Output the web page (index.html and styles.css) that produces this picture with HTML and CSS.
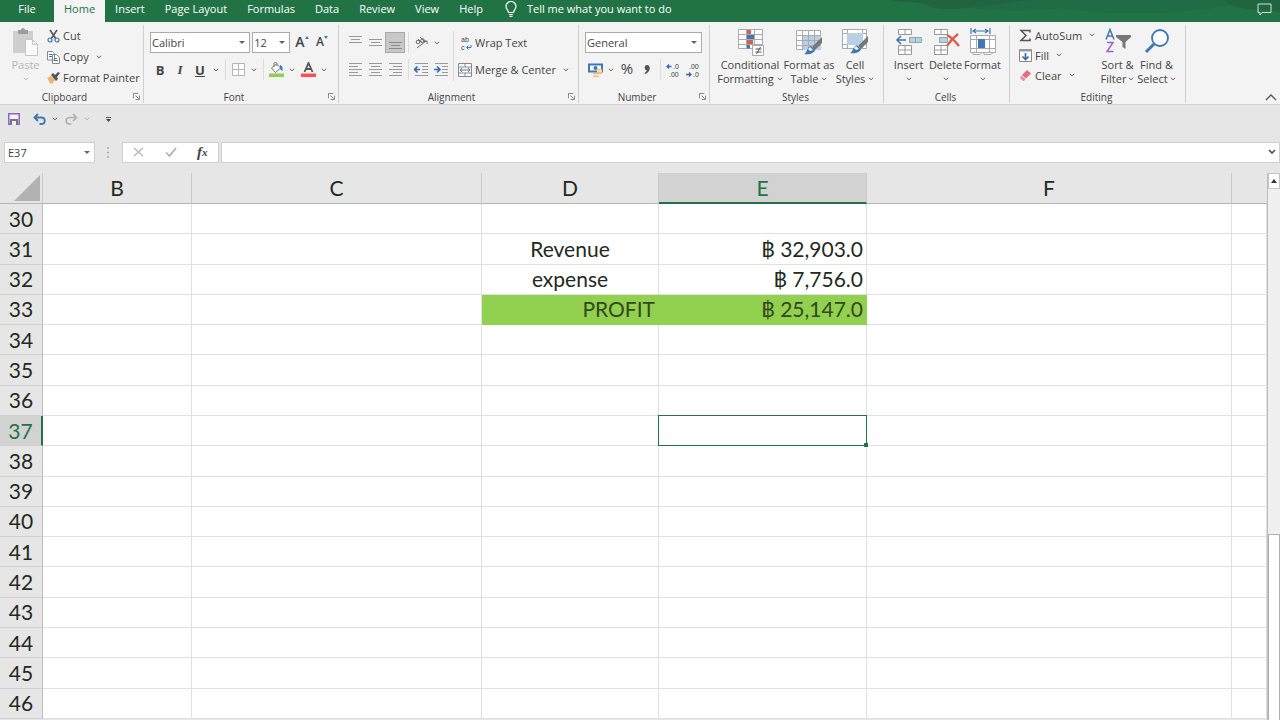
FILE: index.html
```html
<!DOCTYPE html>
<html lang="en">
<head>
    <meta charset="UTF-8">
    <meta name="viewport" content="width=device-width, initial-scale=1.0">
    <title>Excel</title>
    <link rel="stylesheet" href="styles.css">
</head>
<body>

<!-- shared icons -->
<svg class="defs" width="0" height="0">
    <symbol id="chev" viewBox="0 0 6 4"><path d="M.8 .8L3 2.8L5.2 .8" fill="none" stroke="#666"/></symbol>
    <symbol id="launch" viewBox="0 0 8 8"><path d="M.5 6V.5H6M3 3l3.5 3.5M7.5 3v4.500H3" fill="none" stroke="#777"/></symbol>
    <symbol id="brush" viewBox="0 0 20 20"><path d="M19 1v6l-7 7-3-3z" fill="#777"/><path d="M8 10l4 4c-1 3-5 5-11 4 3-1 3-7 7-8z" fill="#3e78b3"/><path d="M7 11l3 3-3 1-2-2z" fill="#eef5fb"/></symbol>
</svg>

<header class="titlebar">
    <svg class="swirl" viewBox="0 0 390 22"><path d="M0 0c12 3 24 1 35 4 8 7 28 5 44 4 16-2 26-1 36-4 10-2 20-2 30-4z" fill="#206540"/><path d="M80 8c20 3 60 4 90 0 50 8 120 7 170-3V0H140z" fill="#206c44"/><path d="M335 0c4 6 14 8 22 9 10 1 20 1 33 3V0z" fill="#206540"/></svg>
    <nav class="tabs">
        <button class="tab file">File</button>
        <button class="tab active">Home</button>
        <button class="tab">Insert</button>
        <button class="tab">Page Layout</button>
        <button class="tab">Formulas</button>
        <button class="tab">Data</button>
        <button class="tab">Review</button>
        <button class="tab">View</button>
        <button class="tab">Help</button>
    </nav>
    <label class="tell">
        <svg width="12" height="16" viewBox="0 0 12 16"><path d="M3.500 11.500C3.500 9 1 8.500 1 5.500a5 5 0 0 1 10 0c0 3-2.500 3.500-2.500 6zM4 13.500h4M4.500 15.300h3" fill="none" stroke="#fff" stroke-width="1.200"/></svg>
        <input type="text" placeholder="Tell me what you want to do" aria-label="Tell me what you want to do">
    </label>
    <button class="comments" aria-label="Comments"><svg width="15" height="13" viewBox="0 0 15 13"><path d="M1 1h13v8.500H5L3 12V9.500H1z" fill="none" stroke="#cfe3d7"/></svg></button>
</header>

<div class="ribbon">
    <section class="group clipboard">
        <div class="group-body">
            <button class="big disabled">
                <svg width="28" height="28" viewBox="0 0 28 28"><path d="M1 3h20v22H1z" fill="#cfcfcf"/><path d="M6 2h3c0-2.500 4-2.500 4 0h3v4H6z" fill="#9c9c9c"/><path d="M13.500 11.500h7l5 5v11h-12z" fill="#fafafa" stroke="#c4c4c4"/><path d="M20.500 11.500v5h5" fill="none" stroke="#c4c4c4"/></svg>
                <span>Paste</span>
                <svg class="chev"><use href="#chev"/></svg>
            </button>
            <div class="stack">
                <button class="item"><svg width="13" height="14" viewBox="0 0 13 14"><path d="M3 1l6 9M10 1L4 10" stroke="#555" stroke-width="1.600"/><circle cx="3" cy="11" r="2" fill="none" stroke="#3e78b3" stroke-width="1.200"/><circle cx="10" cy="11" r="2" fill="none" stroke="#3e78b3" stroke-width="1.200"/></svg>Cut</button>
                <button class="item"><svg width="13" height="14" viewBox="0 0 13 14"><path d="M.5 1.500h5l2 2V10h-7zM5.500 4.500h4l3 3v6h-7z" fill="#fff" stroke="#888"/><path d="M2 4.500h3M2 6.500h3M7 8.500h3M7 10.500h4" stroke="#3e78b3"/></svg>Copy<svg class="chev"><use href="#chev"/></svg></button>
                <button class="item"><svg width="13" height="14" viewBox="0 0 13 14"><path d="M0 7l4-2 4 4-3 4C2 12 2 9 0 7z" fill="#efb566"/><path d="M4 4l2-2 2 2 3-3 2 1-3 4 1 2-2 2z" fill="#555"/></svg>Format Painter</button>
            </div>
        </div>
        <div class="group-label">Clipboard<button class="launch" aria-label="Clipboard settings"><svg width="7" height="7"><use href="#launch"/></svg></button></div>
    </section>

    <section class="group font">
        <div class="group-body rows">
            <div class="row">
                <span class="combo name"><select aria-label="Font"><option>Calibri</option></select></span>
                <span class="combo size"><select aria-label="Font size"><option>12</option></select></span>
                <button class="tool grow" aria-label="Increase font size">A<svg width="4" height="3" viewBox="0 0 4 3"><path d="M0 3l2-3 2 3z" fill="#3e78b3"/></svg></button>
                <button class="tool grow less" aria-label="Decrease font size">A<svg width="4" height="3" viewBox="0 0 4 3"><path d="M0 0l2 3 2-3z" fill="#3e78b3"/></svg></button>
            </div>
            <div class="row">
                <button class="tool"><b>B</b></button>
                <button class="tool italic"><i>I</i></button>
                <button class="tool"><u>U</u></button>
                <button class="arrow" aria-label="Underline options"><svg class="chev"><use href="#chev"/></svg></button>
                <span class="sep"></span>
                <button class="tool" aria-label="Borders"><svg width="13" height="13" viewBox="0 0 13 13"><path d="M.5.5h12v12H.5zM6.500.5v12M.5 6.500h12" fill="#fff" stroke="#b5b5b5"/></svg></button>
                <button class="arrow" aria-label="Border options"><svg class="chev"><use href="#chev"/></svg></button>
                <span class="sep"></span>
                <button class="tool" aria-label="Fill colour"><svg width="15" height="15" viewBox="0 0 15 15"><path d="M2.500 6l5-4 4 4-5 4.500zM5 5V1.500c0-1.500 3-1.500 3 0V4" fill="#fff" stroke="#777"/><path d="M11 3c3 1 2.500 3 2.500 6-1-1-2.500-1-2.500-3z" fill="#3e78b3"/><path d="M0 11.500h15V15H0z" fill="#8fd14b"/></svg></button>
                <button class="arrow" aria-label="Fill options"><svg class="chev"><use href="#chev"/></svg></button>
                <button class="tool" aria-label="Font colour"><svg width="15" height="15" viewBox="0 0 15 15"><path d="M3.500 10L7.500 1l4 9M5 7h5" fill="none" stroke="#555" stroke-width="1.800"/><path d="M0 11.500h15V15H0z" fill="#fb4f4f"/></svg></button>
                <button class="arrow" aria-label="Font colour options"><svg class="chev"><use href="#chev"/></svg></button>
            </div>
        </div>
        <div class="group-label">Font<button class="launch" aria-label="Font settings"><svg width="7" height="7"><use href="#launch"/></svg></button></div>
    </section>

    <section class="group alignment">
        <div class="group-body">
            <div class="rows">
                <div class="row">
                    <button class="tool" aria-label="Top align"><svg width="13" height="15" viewBox="0 0 13 15"><path d="M0 1.500h13M2 4.500h9M0 7.500h13" stroke="#999"/></svg></button>
                    <button class="tool" aria-label="Middle align"><svg width="13" height="15" viewBox="0 0 13 15"><path d="M0 4.500h13M2 7.500h9M0 10.500h13" stroke="#999"/></svg></button>
                    <button class="tool pressed" aria-label="Bottom align"><svg width="13" height="15" viewBox="0 0 13 15"><path d="M0 7.500h13M2 10.500h9M0 13.500h13" stroke="#888"/></svg></button>
                    <span class="sep"></span>
                    <button class="tool" aria-label="Orientation"><svg width="13" height="13" viewBox="0 0 13 13"><g fill="none" stroke="#666"><circle cx="3" cy="6" r="1.800"/><path d="M3 3l4 4M5 1l5 5"/><circle cx="7.500" cy="4.500" r="1.800"/><path d="M2 12l9-7M8.500 5H12v3"/></g></svg></button>
                    <button class="arrow" aria-label="Orientation options"><svg class="chev"><use href="#chev"/></svg></button>
                </div>
                <div class="row">
                    <button class="tool" aria-label="Align left"><svg width="13" height="13" viewBox="0 0 13 13"><path d="M0 .5h13M0 3.500h9M0 6.500h13M0 9.500h9M0 12.500h13" stroke="#999"/></svg></button>
                    <button class="tool" aria-label="Centre"><svg width="13" height="13" viewBox="0 0 13 13"><path d="M0 .5h13M2 3.500h9M0 6.500h13M2 9.500h9M0 12.500h13" stroke="#999"/></svg></button>
                    <button class="tool" aria-label="Align right"><svg width="13" height="13" viewBox="0 0 13 13"><path d="M0 .5h13M4 3.500h9M0 6.500h13M4 9.500h9M0 12.500h13" stroke="#999"/></svg></button>
                    <span class="sep"></span>
                    <button class="tool" aria-label="Decrease indent"><svg width="14" height="13" viewBox="0 0 14 13"><path d="M1 .5h13M8 3.500h6M8 6.500h6M8 9.500h6M1 12.500h13" stroke="#999"/><path d="M6 6.500H1M3.500 3.500l-3 3 3 3" fill="none" stroke="#2f6fb3" stroke-width="1.600"/></svg></button>
                    <button class="tool" aria-label="Increase indent"><svg width="14" height="13" viewBox="0 0 14 13"><path d="M1 .5h13M8 3.500h6M8 6.500h6M8 9.500h6M1 12.500h13" stroke="#999"/><path d="M0 6.500h5M3 3.500l3 3-3 3" fill="none" stroke="#2f6fb3" stroke-width="1.600"/></svg></button>
                </div>
            </div>
            <span class="sep tall"></span>
            <div class="rows">
                <div class="row"><button class="item"><svg width="14" height="18" viewBox="0 0 14 18"><text class="glyph" x="3" y="8">ab</text><text class="glyph" x="3" y="16">c</text><path d="M13 11v2.500H9M10.500 11.500l-2 2 2 2" fill="none" stroke="#3e78b3"/></svg>Wrap Text</button></div>
                <div class="row"><button class="item"><svg width="14" height="14" viewBox="0 0 14 14"><path d="M.5.5h13v13H.5zM.5 4h13M.5 10h13M7 .5V4M7 10v3.500" fill="#fff" stroke="#888"/><path d="M2 7h10M4 5L2 7l2 2M10 5l2 2-2 2" fill="none" stroke="#3e78b3"/></svg>Merge &amp; Center<svg class="chev"><use href="#chev"/></svg></button></div>
            </div>
        </div>
        <div class="group-label">Alignment<button class="launch" aria-label="Alignment settings"><svg width="7" height="7"><use href="#launch"/></svg></button></div>
    </section>

    <section class="group number">
        <div class="group-body rows">
            <div class="row"><span class="combo format"><select aria-label="Number format"><option>General</option></select></span></div>
            <div class="row">
                <button class="tool" aria-label="Accounting format"><svg width="15" height="14" viewBox="0 0 15 14"><path d="M1 1.500h13v7H1z" fill="#fff" stroke="#3e78b3" stroke-width="2"/><circle cx="7.500" cy="5" r="2" fill="#3e78b3"/><path d="M9 6h5v5H9zM5 10h6v4H5z" fill="#f1bd7c"/><path d="M9 8h5M5 12h6" stroke="#fff"/></svg></button>
                <button class="arrow" aria-label="Currency options"><svg class="chev"><use href="#chev"/></svg></button>
                <button class="tool percent">%</button>
                <button class="tool" aria-label="Comma style"><svg width="6" height="10" viewBox="0 0 6 10"><path d="M3 0c4 0 4 7-2 9l-.5-1C2 7 3 6 2.500 5 0 5 0 0 3 0z" fill="#555"/></svg></button>
                <span class="sep"></span>
                <button class="tool" aria-label="Increase decimal"><svg width="16" height="18" viewBox="0 0 16 18"><text class="glyph" x="8" y="8">.0</text><text class="glyph" x="4" y="16">.00</text><path d="M6.500 5.500H2M4 3.500l-2 2 2 2" fill="none" stroke="#2f6fb3" stroke-width="1.300"/></svg></button>
                <button class="tool" aria-label="Decrease decimal"><svg width="16" height="18" viewBox="0 0 16 18"><text class="glyph" x="4" y="8">.00</text><text class="glyph" x="8" y="16">.0</text><path d="M1 13.500h4.500M4 11.500l2 2-2 2" fill="none" stroke="#2f6fb3" stroke-width="1.300"/></svg></button>
            </div>
        </div>
        <div class="group-label">Number<button class="launch" aria-label="Number settings"><svg width="7" height="7"><use href="#launch"/></svg></button></div>
    </section>

    <section class="group styles">
        <div class="group-body">
            <button class="big wide">
                <svg width="28" height="28" viewBox="0 0 28 28"><path d="M2.500 1.500h24v19h-24zM2.500 6.500h24M2.500 11.500h24M2.500 16.500h24M10.500 1.500v19M18.500 1.500v19" fill="#fff" stroke="#aaa"/><path d="M11 2h4v4h-4zM11 12h6v4h-6z" fill="#d95f4b"/><path d="M11 7h7v4h-7zM11 17h3v3.500h-3z" fill="#3e78b3"/><path d="M16.500 17.500h11v10h-11z" fill="#fff" stroke="#aaa"/><path d="M19.500 21h6M19.500 24h6M24.500 19l-4 7" stroke="#555"/></svg>
                <span>Conditional</span>
                <span>Formatting <svg class="chev"><use href="#chev"/></svg></span>
            </button>
            <button class="big mid">
                <svg width="28" height="28" viewBox="0 0 28 28"><path d="M1.500 2.500h24v19h-24z" fill="#fff" stroke="#aaa"/><path d="M8 8h18v14H8z" fill="#b9cfe4"/><path d="M1.500 7.500h24M1.500 12.500h24M1.500 17.500h24M7.500 2.500v19M13.500 2.500v19M19.500 2.500v19" stroke="#aaa"/><use href="#brush" x="8" y="8" width="20" height="20"/></svg>
                <span>Format as</span>
                <span>Table <svg class="chev"><use href="#chev"/></svg></span>
            </button>
            <button class="big">
                <svg width="28" height="28" viewBox="0 0 28 28"><path d="M1.500 1.500h24v19h-24zM1.500 5.500h24M1.500 16.500h24M6.500 1.500v19M21.500 1.500v19" fill="#fff" stroke="#aaa"/><path d="M6 5h16v12H6z" fill="#b9cfe4"/><use href="#brush" x="8" y="7" width="20" height="20"/></svg>
                <span>Cell</span>
                <span>Styles <svg class="chev"><use href="#chev"/></svg></span>
            </button>
        </div>
        <div class="group-label">Styles</div>
    </section>

    <section class="group cells">
        <div class="group-body">
            <button class="big">
                <svg width="28" height="28" viewBox="0 0 28 28"><path d="M3.500 1.500h13v5h-13zM10 1.500v5M3.500 17.500h13v9h-13zM10 17.500v9M3.500 22h13" fill="#fff" stroke="#999"/><path d="M14.500 9.500h12v5h-12zM20.500 9.500v5" fill="#b9cfe4" stroke="#8aa"/><path d="M11 12H2M6 8l-4 4 4 4" fill="none" stroke="#3e78b3" stroke-width="1.600"/></svg>
                <span>Insert</span>
                <svg class="chev"><use href="#chev"/></svg>
            </button>
            <button class="big">
                <svg width="28" height="28" viewBox="0 0 28 28"><path d="M2.500 1.500h13v5h-13zM9 1.500v5M2.500 17.500h13v9h-13zM9 17.500v9M2.500 22h13" fill="#fff" stroke="#999"/><path d="M7.500 9.500h8v5h-8z" fill="#b9cfe4" stroke="#8aa"/><path d="M15 7c4 2 8 6 12 11M26 6c-4 3-8 7-11 12" fill="none" stroke="#dc5a48" stroke-width="2.200"/></svg>
                <span>Delete</span>
                <svg class="chev"><use href="#chev"/></svg>
            </button>
            <button class="big">
                <svg width="28" height="28" viewBox="0 0 28 28"><path d="M1.500 7.500h25v17h-25zM1.500 11.500h25M1.500 20.500h25M7.500 7.500v17M20.500 7.500v17M4 24.500v2h7l2-2M15 24.500v2h7l2-2" fill="#fff" stroke="#aaa"/><path d="M9 11h7v9H9z" fill="#3e78b3"/><path d="M2 0v6M21 0v6M4 3h15M7 1L4 3l3 2M16 1l3 2-3 2" fill="none" stroke="#3e78b3" stroke-width="1.200"/></svg>
                <span>Format</span>
                <svg class="chev"><use href="#chev"/></svg>
            </button>
        </div>
        <div class="group-label">Cells</div>
    </section>

    <section class="group editing">
        <div class="group-body">
            <div class="stack">
                <button class="item"><svg width="13" height="13" viewBox="0 0 13 13"><path d="M11 3.500V1.500H2l5 5-5 5h9v-2" fill="none" stroke="#555" stroke-width="1.500"/></svg>AutoSum<svg class="chev far"><use href="#chev"/></svg></button>
                <button class="item"><svg width="13" height="13" viewBox="0 0 13 13"><path d="M.5.5h12v12H.5z" fill="#fff" stroke="#888"/><path d="M0 0h13v2.500H0z" fill="#999"/><path d="M6.500 4v6.500M3.500 7.500l3 3 3-3" fill="none" stroke="#2f6fb3" stroke-width="1.700"/></svg>Fill<svg class="chev"><use href="#chev"/></svg></button>
                <button class="item"><svg width="13" height="13" viewBox="0 0 13 13"><path d="M8 1l4 3.500-5 5L3 6z" fill="#e46c7c"/><path d="M2.500 6.500l4 3.500-1.500 2H4L1 9z" fill="#ee8f9b"/></svg>Clear<svg class="chev"><use href="#chev"/></svg></button>
            </div>
            <button class="big">
                <svg width="28" height="28" viewBox="0 0 28 28"><path d="M2 11.500L6 1.500l4 10M3.500 8h5" fill="none" stroke="#3e78b3" stroke-width="1.500"/><path d="M3 14.500h6L3 23.500h6.500" fill="none" stroke="#9a5fd0" stroke-width="1.500"/><path d="M12 7h15v2l-5.500 5v7l-3-2v-5L12 9z" fill="#777"/></svg>
                <span>Sort &amp;</span>
                <span>Filter <svg class="chev"><use href="#chev"/></svg></span>
            </button>
            <button class="big">
                <svg width="28" height="28" viewBox="0 0 28 28"><circle cx="17" cy="10" r="8" fill="#fbfdff" stroke="#3e78b3" stroke-width="1.800"/><path d="M11 16l-8 8" stroke="#3e78b3" stroke-width="3"/></svg>
                <span>Find &amp;</span>
                <span>Select <svg class="chev"><use href="#chev"/></svg></span>
            </button>
        </div>
        <div class="group-label">Editing</div>
    </section>
    <button class="collapse" aria-label="Collapse ribbon"><svg width="12" height="8" viewBox="0 0 12 8"><path d="M1 7l5-5 5 5" fill="none" stroke="#555" stroke-width="1.300"/></svg></button>
</div>

<div class="quick">
    <button class="tool" aria-label="Save"><svg width="12" height="12" viewBox="0 0 12 12"><path d="M.8.8h10.400v10.400H.8z" fill="#f6f0fc" stroke="#8c62c6" stroke-width="1.500"/><path d="M2 6h8v5H2z" fill="#777"/><path d="M4 8h4v4H4z" fill="#eee"/></svg></button>
    <button class="tool undo" aria-label="Undo"><svg width="13" height="12" viewBox="0 0 13 12"><path d="M5 1L1.500 4.500 5 8M2 4.500h6c5 0 5 6.500 0 6.500H6.500" fill="none" stroke="#3e78b3" stroke-width="1.900"/></svg></button>
    <button class="arrow" aria-label="Undo list"><svg class="chev"><use href="#chev"/></svg></button>
    <button class="tool" aria-label="Redo"><svg width="13" height="12" viewBox="0 0 13 12"><path d="M8 1l3.500 3.500L8 8M11 4.500H5c-5 0-5 6.500 0 6.500h1.500" fill="none" stroke="#b0b0b0" stroke-width="1.700"/></svg></button>
    <button class="arrow faded" aria-label="Redo list"><svg class="chev"><use href="#chev"/></svg></button>
    <button class="tool customise" aria-label="Customise toolbar"><svg width="5" height="5" viewBox="0 0 5 5"><path d="M0 .5h5" stroke="#555"/><path d="M0 2h5L2.500 5z" fill="#444"/></svg></button>
</div>

<div class="formula-bar">
    <span class="combo ref"><input type="text" value="E37" aria-label="Name box"></span>
    <svg class="dots" width="2" height="11" viewBox="0 0 2 11"><path d="M0 1h2M0 5.500h2M0 10h2" stroke="#aaa" stroke-width="1.500"/></svg>
    <div class="formula-tools">
        <button aria-label="Cancel"><svg width="11" height="10" viewBox="0 0 11 10"><path d="M1 1l9 8M10 1L1 9" stroke="#b8b8b8" stroke-width="1.400"/></svg></button>
        <button aria-label="Enter"><svg width="12" height="10" viewBox="0 0 12 10"><path d="M1 5.500L4.500 9 11 1" fill="none" stroke="#b0b0b0" stroke-width="1.700"/></svg></button>
        <button class="fx">f<small>x</small></button>
    </div>
    <div class="formula-input">
        <input type="text" aria-label="Formula bar">
        <button aria-label="Expand formula bar"><svg width="8" height="6" viewBox="0 0 8 6"><path d="M1 1l3 3 3-3" fill="none" stroke="#555" stroke-width="1.700"/></svg></button>
    </div>
</div>

<main class="sheet">
    <table class="grid">
        <colgroup><col class="col-head"><col class="col-b"><col class="col-c"><col class="col-d"><col class="col-e"><col class="col-f"><col></colgroup>
        <thead>
            <tr>
                <th class="corner"><svg width="26" height="26" viewBox="0 0 26 26"><path d="M26 0v26H0z" fill="#b2b2b2"/></svg></th>
                <th>B</th><th>C</th><th>D</th><th class="selected">E</th><th>F</th><th></th>
            </tr>
        </thead>
        <tbody>
            <tr><th>30</th><td></td><td></td><td></td><td></td><td></td><td></td></tr>
            <tr><th>31</th><td></td><td></td><td class="center">Revenue</td><td class="money">฿ 32,903.0</td><td></td><td></td></tr>
            <tr><th>32</th><td></td><td></td><td class="center">expense</td><td class="money">฿ 7,756.0</td><td></td><td></td></tr>
            <tr class="profit"><th>33</th><td></td><td></td><td class="total">PROFIT</td><td class="total">฿ 25,147.0</td><td></td><td></td></tr>
            <tr><th>34</th><td></td><td></td><td></td><td></td><td></td><td></td></tr>
            <tr><th>35</th><td></td><td></td><td></td><td></td><td></td><td></td></tr>
            <tr><th>36</th><td></td><td></td><td></td><td></td><td></td><td></td></tr>
            <tr><th class="selected">37</th><td></td><td></td><td></td><td class="active-cell"><span class="handle"></span></td><td></td><td></td></tr>
            <tr><th>38</th><td></td><td></td><td></td><td></td><td></td><td></td></tr>
            <tr><th>39</th><td></td><td></td><td></td><td></td><td></td><td></td></tr>
            <tr><th>40</th><td></td><td></td><td></td><td></td><td></td><td></td></tr>
            <tr><th>41</th><td></td><td></td><td></td><td></td><td></td><td></td></tr>
            <tr><th>42</th><td></td><td></td><td></td><td></td><td></td><td></td></tr>
            <tr><th>43</th><td></td><td></td><td></td><td></td><td></td><td></td></tr>
            <tr><th>44</th><td></td><td></td><td></td><td></td><td></td><td></td></tr>
            <tr><th>45</th><td></td><td></td><td></td><td></td><td></td><td></td></tr>
            <tr><th>46</th><td></td><td></td><td></td><td></td><td></td><td></td></tr>
        </tbody>
    </table>
    <div class="scrollbar">
        <button aria-label="Scroll up"><svg width="6" height="4" viewBox="0 0 6 4"><path d="M0 4l3-4 3 4z" fill="#333"/></svg></button>
        <div class="thumb"></div>
    </div>
</main>

</body>
</html>
```

FILE: styles.css
```css
* {
    box-sizing: border-box;
}

body {
    margin: 0;
    height: 100vh;
    display: flex;
    flex-direction: column;
    overflow: hidden;
    background: #e6e6e6;
    color: #444;
    font-family: "Open Sans", "Noto Sans", sans-serif;
    font-size: 11px;
}

button, input, select {
    font: inherit;
    color: inherit;
    background: none;
    border: none;
    border-radius: 0;
    padding: 0;
    margin: 0;
    outline: none;
}

button {
    display: flex;
    align-items: center;
    justify-content: center;
    white-space: nowrap;
    cursor: pointer;
}

svg {
    display: block;
    flex: none;
}

.defs {
    position: absolute;
}

.chev {
    width: 6px;
    height: 4px;
}

/* title bar */
.titlebar {
    display: flex;
    flex: none;
    height: 22px;
    background: #217346;
    color: #fff;
    position: relative;
}

.swirl {
    position: absolute;
    right: 0;
    top: 0;
    width: 390px;
    height: 22px;
}

.tabs {
    display: flex;
}

.tab {
    padding: 0 10px 5px;
}

.tab.file {
    width: 54px;
}

.tab.active {
    background: #f3f3f3;
    color: #217346;
}

.tell {
    display: flex;
    align-items: center;
    gap: 10px;
    margin-left: 12px;
    padding-bottom: 5px;
    flex: 1;
}

.tell input {
    width: 200px;
}

.tell input::placeholder {
    color: #fff;
    opacity: 1;
}

.comments {
    position: relative;
    margin-right: 8px;
    padding-bottom: 4px;
}

/* ribbon */
.ribbon {
    display: flex;
    flex: none;
    height: 83px;
    padding: 3px 0 1px;
    background: #f3f3f3;
    border-bottom: 1px solid #d2d2d2;
}

.group {
    display: flex;
    flex-direction: column;
    flex: none;
    border-right: 1px solid #d0d0d0;
}

.clipboard { width: 144px; }
.font { width: 195px; }
.alignment { width: 240px; }
.number { width: 131px; }
.styles { width: 174px; }
.cells { width: 126px; }
.editing { width: 176px; }

.group-body {
    display: flex;
    flex: 1;
    padding: 0 6px;
}

.rows {
    display: flex;
    flex-direction: column;
    padding-top: 4px;
}

.group-body.rows {
    padding: 4px 6px 0;
}

.group-label {
    position: relative;
    height: 13px;
    line-height: 15px;
    font-size: 10px;
    text-align: center;
    padding-right: 14px;
}

.styles .group-label,
.cells .group-label,
.editing .group-label {
    padding-right: 2px;
}

.launch {
    position: absolute;
    right: 3px;
    top: 3px;
}

.row {
    display: flex;
    align-items: center;
    height: 27px;
}

.stack {
    display: flex;
    flex-direction: column;
}

.clipboard .group-body {
    padding-right: 0;
}

.clipboard .stack {
    margin-left: 2px;
}

.item {
    height: 21px;
    gap: 3px;
    justify-content: flex-start;
}

.item .chev {
    margin-left: 4px;
}

.clipboard .big {
    width: 39px;
}

.tool {
    width: 20px;
    height: 21px;
    flex: none;
}

.tool b, .tool i, .tool u {
    font-size: 13px;
    font-weight: bold;
}

.tool i {
    font-family: "Liberation Serif", serif;
}

.arrow {
    width: 12px;
    height: 21px;
}

.faded, .disabled .chev {
    opacity: 0.4;
}

.grow {
    font-size: 14px;
    font-weight: 600;
    align-items: flex-start;
}

.grow svg {
    margin-top: 4px;
}

.less {
    font-size: 12px;
    line-height: 20px;
}

.pressed {
    background: #c8c8c8;
    border: 1px solid #a8a8a8;
}

.percent {
    font-size: 15px;
    line-height: 18px;
    align-items: flex-start;
}

.sep {
    width: 1px;
    height: 21px;
    margin: 0 2px 0 3px;
    background: #dcdcdc;
}

.sep.tall {
    height: 50px;
    margin: 6px 4px 0 2px;
}

.glyph {
    font-family: "Liberation Sans", sans-serif;
    font-size: 7px;
    fill: #444;
}

.combo {
    position: relative;
    display: flex;
    height: 21px;
    background: #fff;
    border: 1px solid #ababab;
}

.combo::after {
    content: "";
    position: absolute;
    right: 4px;
    top: 8px;
    border: 3px solid transparent;
    border-top-color: #666;
    border-bottom: none;
}

.combo select, .combo input {
    appearance: none;
    width: 100%;
    padding-left: 1px;
}

.combo.name {
    width: 101px;
    margin-right: 2px;
}

.combo.size {
    width: 38px;
    margin-right: 2px;
}

.combo.format {
    width: 117px;
}

.big {
    flex: none;
    flex-direction: column;
    justify-content: flex-start;
    width: 37px;
    padding-top: 3px;
}

.big span {
    display: flex;
    align-items: center;
    gap: 3px;
    line-height: 14px;
}

.big > svg:first-child {
    margin-bottom: 2px;
}

.big > .chev {
    margin-top: 5px;
}

.disabled {
    color: #b5b5b5;
}

.styles .big { width: 42px; }
.styles .mid { width: 50px; }
.styles .wide { width: 68px; }

.editing .group-body {
    padding: 0 9px;
}

.editing .stack {
    width: 79px;
}

.editing .item {
    height: 20px;
}

.editing .big {
    width: 39px;
}

.editing .big span {
    gap: 2px;
}

.collapse {
    align-self: flex-end;
    margin: 0 3px 2px auto;
}

/* quick access */
.quick {
    display: flex;
    align-items: center;
    flex: none;
    height: 28px;
    padding-left: 4px;
}

.quick .undo {
    margin-left: 5px;
}

.quick .customise {
    margin-left: 5px;
}

/* formula bar */
.formula-bar {
    display: flex;
    align-items: center;
    flex: none;
    height: 40px;
    padding: 0 0 2px 4px;
}

.combo.ref {
    width: 91px;
    border-color: #cfcfcf;
}

.combo.ref input {
    padding-left: 3px;
}

.dots {
    margin: 0 13px 0 12px;
}

.formula-tools {
    display: flex;
    width: 97px;
    height: 21px;
    background: #fff;
    border: 1px solid #cfcfcf;
}

.formula-tools button {
    flex: 1;
}

.fx {
    font-family: "Liberation Serif", serif;
    font-size: 15px;
    font-style: italic;
    font-weight: bold;
}

.fx small {
    font-size: 11px;
}

.formula-input {
    display: flex;
    flex: 1;
    height: 21px;
    margin-left: 2px;
    padding-right: 3px;
    background: #fff;
    border: 1px solid #cfcfcf;
}

.formula-input input {
    flex: 1;
}

/* sheet */
.sheet {
    display: flex;
    flex: 1;
    min-height: 0;
}

.grid {
    flex: 1;
    width: 0;
    margin-bottom: 1px;
    table-layout: fixed;
    border-collapse: separate;
    border-spacing: 0;
    color: #1f2a20;
    font-family: Lato, "Noto Sans", sans-serif;
    font-size: 21px;
    line-height: 28px;
}

.col-head { width: 43px; }
.col-b { width: 149px; }
.col-c { width: 290px; }
.col-d { width: 177px; }
.col-e { width: 208px; }
.col-f { width: 365px; }

.grid th {
    padding: 0;
    font-weight: normal;
    background: #e6e6e6;
    border-right: 1px solid #bdbdbd;
    border-bottom: 1px solid #cfcfcf;
}

.grid thead th {
    height: 31px;
    border-right-color: #cacaca;
    border-bottom-color: #b5b5b5;
}

.grid thead th:last-child {
    border-right: none;
}

.grid .corner svg {
    margin-left: 14px;
}

.grid .selected {
    background: #d2d2d2;
    color: #217346;
}

.grid thead .selected {
    border-bottom: 2px solid #217346;
}

.grid tbody .selected {
    border-right: 2px solid #217346;
}

.grid td {
    padding: 0 3px;
    background: #fff;
    border-right: 1px solid #e0e0e0;
    border-bottom: 1px solid #e0e0e0;
}

.grid .center {
    text-align: center;
}

.grid .money, .grid .total {
    text-align: right;
}

.grid .total {
    background: #92d050;
    border-color: #92d050;
    color: #33481c;
}

.grid .active-cell {
    position: relative;
}

.active-cell::after {
    content: "";
    position: absolute;
    inset: -1px;
    border: 1px solid #217346;
}

.handle {
    position: absolute;
    right: -2px;
    bottom: -2px;
    z-index: 1;
    width: 4px;
    height: 4px;
    background: #217346;
}

.scrollbar {
    display: flex;
    flex-direction: column;
    justify-content: space-between;
    width: 13px;
    background: #f0f0f0;
    border-left: 1px solid #bdbdbd;
}

.scrollbar button {
    height: 16px;
    background: #fff;
    border: 1px solid #c4c4c4;
}

.thumb {
    height: 34%;
    background: #fff;
    border: 1px solid #b0b0b0;
    border-bottom: none;
}
```
